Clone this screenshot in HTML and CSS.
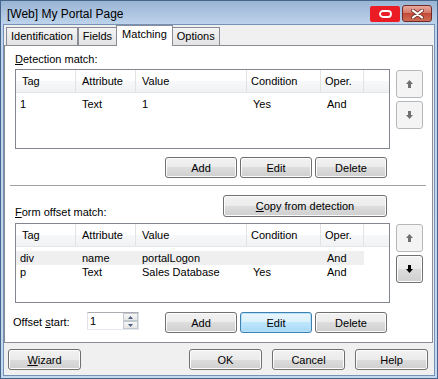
FILE: index.html
```html
<!DOCTYPE html>
<html lang="en">
<head>
  <meta charset="UTF-8">
  <title>[Web] My Portal Page</title>
  <link rel="stylesheet" href="styles.css">
</head>
<body>
  <div class="window">
    <div class="titlebar">
      <span class="title">[Web] My Portal Page</span>
      <div class="caption-btns">
        <span class="cap-btn cap-logo">
          <svg width="13" height="8" viewBox="0 0 13 8"><rect x="1" y="1" width="11" height="6" rx="3" fill="none" stroke="#fff" stroke-width="1.8"/></svg>
        </span>
        <span class="cap-btn cap-close">
          <svg width="13" height="10" viewBox="0 0 13 10">
            <path d="M2 1.5 L11 8.5 M11 1.5 L2 8.5" stroke="#7a3a32" stroke-width="4" stroke-linecap="round"/>
            <path d="M2 1.5 L11 8.5 M11 1.5 L2 8.5" stroke="#fff" stroke-width="2.2" stroke-linecap="round"/>
          </svg>
        </span>
      </div>
    </div>

    <div class="client">
      <div class="tabs">
        <div class="tab">Identification</div>
        <div class="tab">Fields</div>
        <div class="tab active">Matching</div>
        <div class="tab">Options</div>
      </div>

      <div class="panel">
        <div class="label"><u>D</u>etection match:</div>
        <div class="section">
          <div class="list-col">
            <div class="listview">
              <div class="lv-head">
                <span class="c1">Tag</span><span class="c2">Attribute</span><span class="c3">Value</span><span class="c4">Condition</span><span class="c5">Oper.</span>
              </div>
              <div class="lv-body">
                <div class="lv-row">
                  <span class="c1">1</span><span class="c2">Text</span><span class="c3">1</span><span class="c4">Yes</span><span class="c5">And</span>
                </div>
              </div>
            </div>
            <div class="btn-row">
              <button class="btn">Add</button>
              <button class="btn">Edit</button>
              <button class="btn">Delete</button>
            </div>
          </div>
          <div class="side">
            <button class="arrow-btn disabled">
              <svg width="7" height="8" viewBox="0 0 7 8"><polygon points="3.5,0 7,4 5,4 5,8 2,8 2,4 0,4"/></svg>
            </button>
            <button class="arrow-btn disabled">
              <svg width="7" height="8" viewBox="0 0 7 8"><polygon points="3.5,8 7,4 5,4 5,0 2,0 2,4 0,4"/></svg>
            </button>
          </div>
        </div>

        <div class="separator"></div>

        <div class="copy-row">
          <div class="label copy-label"><u>F</u>orm offset match:</div>
          <button class="btn copy-btn"><u>C</u>opy from detection</button>
        </div>
        <div class="section section2">
          <div class="list-col">
            <div class="listview">
              <div class="lv-head">
                <span class="c1">Tag</span><span class="c2">Attribute</span><span class="c3">Value</span><span class="c4">Condition</span><span class="c5">Oper.</span>
              </div>
              <div class="lv-body">
                <div class="lv-row hot">
                  <span class="c1">div</span><span class="c2">name</span><span class="c3">portalLogon</span><span class="c4"></span><span class="c5">And</span>
                </div>
                <div class="lv-row">
                  <span class="c1">p</span><span class="c2">Text</span><span class="c3">Sales Database</span><span class="c4">Yes</span><span class="c5">And</span>
                </div>
              </div>
            </div>
          </div>
          <div class="side">
            <button class="arrow-btn disabled">
              <svg width="7" height="8" viewBox="0 0 7 8"><polygon points="3.5,0 7,4 5,4 5,8 2,8 2,4 0,4"/></svg>
            </button>
            <button class="arrow-btn">
              <svg width="7" height="8" viewBox="0 0 7 8"><polygon points="3.5,8 7,4 5,4 5,0 2,0 2,4 0,4"/></svg>
            </button>
          </div>
        </div>

        <div class="offset-row">
          <div class="offset-label">Offset <u>s</u>tart:</div>
          <div class="spin">
            <span class="spin-val">1</span>
            <span class="spin-btns">
              <span class="spin-btn"><svg width="5" height="3" viewBox="0 0 5 3"><polygon points="2.5,0 5,3 0,3"/></svg></span>
              <span class="spin-btn"><svg width="5" height="3" viewBox="0 0 5 3"><polygon points="0,0 5,0 2.5,3"/></svg></span>
            </span>
          </div>
          <div class="btn-row">
            <button class="btn">Add</button>
            <button class="btn focused">Edit</button>
            <button class="btn">Delete</button>
          </div>
        </div>
      </div>

      <div class="footer">
        <button class="btn"><u>W</u>izard</button>
        <span class="spacer"></span>
        <button class="btn">OK</button>
        <button class="btn">Cancel</button>
        <button class="btn">Help</button>
      </div>
    </div>
  </div>
</body>
</html>
```

FILE: styles.css
```css
body, html {
  height: 100%;
  margin: 0;
}
body {
  font-family: "Liberation Sans", Arial, sans-serif;
  font-size: 11px;
  color: #000;
}
.window {
  width: 438px;
  height: 379px;
  box-sizing: border-box;
  border: 1px solid #45658c;
  padding: 0 2px 2px;
  background: linear-gradient(#99b4d4, #bfd4ec 24px, #c4d8ee);
  display: flex;
  flex-direction: column;
}
.titlebar {
  height: 23px;
  display: flex;
}
.title {
  flex: 1;
  padding: 5px 0 0 4px;
  font-size: 12px;
  line-height: 16px;
  color: #000;
}
.caption-btns {
  display: flex;
  gap: 2px;
  margin-right: 3px;
}
.cap-btn {
  width: 30px;
  box-sizing: border-box;
  display: flex;
  align-items: center;
  justify-content: center;
}
.cap-logo {
  margin-top: 5px;
  height: 16px;
  background: #ec1c24;
  border-radius: 2px;
}
.cap-close {
  margin-top: 4px;
  height: 17px;
  border: 1px solid #6d2b24;
  border-radius: 3px;
  background: linear-gradient(#e9aa9e, #d67a6a 45%, #c44a38 50%, #cf6d55);
}
.client {
  flex: 1;
  border: 1px solid #7592b6;
  background: #f0f0f0;
  display: flex;
  flex-direction: column;
}

/* tabs */
.tabs {
  display: flex;
  align-items: flex-end;
  height: 20px;
  padding-left: 2px;
}
.tab {
  height: 17px;
  line-height: 16px;
  padding: 0 4px;
  border: 1px solid #898c95;
  border-bottom: none;
  background: linear-gradient(#f4f4f4, #e3e3e3);
}
.tab.active {
  position: relative;
  z-index: 1;
  height: 20px;
  margin: 0 -1px -1px;
  padding: 0 5px;
  background: #fff;
}
.panel {
  height: 298px;
  box-sizing: border-box;
  margin-right: 1px;
  border: 1px solid #898c95;
  background: #fff;
  padding: 6px 8px 8px 10px;
}
.label {
  height: 14px;
  line-height: 14px;
}

/* list sections */
.section {
  display: flex;
  gap: 6px;
  margin-top: 3px;
}
.section2 {
  margin-top: 6px;
}
.list-col {
  width: 375px;
}
.listview {
  height: 80px;
  box-sizing: border-box;
  border: 1px solid #828790;
  overflow: hidden;
}
.lv-head {
  display: flex;
  height: 22px;
  border-bottom: 1px solid #e5e5e5;
  background: linear-gradient(#fff 50%, #f7f8f9 50%, #f1f2f4);
}
.lv-head span,
.lv-row span {
  box-sizing: border-box;
  padding-left: 6px;
  white-space: nowrap;
}
.lv-head span {
  line-height: 22px;
  border-right: 1px solid #e3e3e3;
}
.lv-head .c4,
.lv-head .c5 {
  padding-left: 4px;
}
.c1 { width: 60px; }
.c2 { width: 60px; }
.c3 { width: 111px; }
.c4 { width: 74px; }
.c5 { width: 43px; }
.lv-body {
  padding-top: 4px;
}
.lv-row {
  display: flex;
  width: 348px;
  height: 14px;
  line-height: 14px;
}
.lv-row .c1 {
  padding-left: 4px;
}
.lv-row.hot {
  background: #efefef;
}
.side {
  display: flex;
  flex-direction: column;
  gap: 3px;
  margin-top: 1px;
}
.arrow-btn {
  width: 27px;
  height: 28px;
  padding: 0;
  border: 1px solid #707070;
  border-radius: 3px;
  background: linear-gradient(#f2f2f2, #ebebeb 50%, #dddddd 50%, #cfcfcf);
  box-shadow: inset 0 0 0 1px #fcfcfc;
  display: flex;
  align-items: center;
  justify-content: center;
  fill: #000;
}
.arrow-btn.disabled {
  border-color: #b5b8bb;
  background: #f4f4f4;
  box-shadow: none;
  fill: #707070;
}

/* buttons */
.btn-row {
  display: flex;
  justify-content: flex-end;
  gap: 3px;
  margin: 8px 3px 0 0;
}
.btn {
  width: 72px;
  height: 21px;
  padding: 0;
  font: inherit;
  color: #000;
  border: 1px solid #707070;
  border-radius: 3px;
  background: linear-gradient(#f2f2f2, #ebebeb 50%, #dddddd 50%, #cfcfcf);
  box-shadow: inset 0 0 0 1px #fcfcfc;
}
.btn.focused {
  border-color: #3c7fb1;
  background: linear-gradient(#eaf6fd, #d9f0fc 50%, #bee6fd 50%, #a7d9f5);
  box-shadow: inset 0 0 0 1px #b8e2f9;
}
.separator {
  height: 1px;
  background: #a0a0a0;
  margin: 7px -2px 0 -5px;
}
.copy-row {
  width: 375px;
  display: flex;
  justify-content: space-between;
  align-items: flex-end;
  margin-top: 9px;
}
.copy-label {
  margin-bottom: -2px;
}
.copy-btn {
  width: 164px;
  height: 22px;
  margin-right: 3px;
}

/* offset start */
.offset-row {
  width: 375px;
  display: flex;
  align-items: flex-start;
  margin-top: 9px;
}
.offset-label {
  width: 74px;
  margin-left: -2px;
  line-height: 20px;
}
.spin {
  width: 52px;
  height: 18px;
  box-sizing: border-box;
  border: 1px solid;
  border-color: #abadb3 #dbdfe6 #e3e9ef #e2e3ea;
  background: #fff;
  display: flex;
}
.spin-val {
  flex: 1;
  padding-left: 2px;
  line-height: 16px;
}
.spin-btns {
  width: 15px;
  display: flex;
  flex-direction: column;
}
.spin-btn {
  height: 8px;
  box-sizing: border-box;
  border: 1px solid #c3c9d0;
  background: linear-gradient(#f7f7f7, #e6e6e6);
  display: flex;
  align-items: center;
  justify-content: center;
  fill: #4d5f80;
}
.offset-row .btn-row {
  margin: 0 3px 0 auto;
}

/* footer */
.footer {
  display: flex;
  gap: 10px;
  margin-top: 6px;
  padding: 0 6px 0 4px;
}
.footer .btn {
  width: 73px;
}
.spacer {
  flex: 1;
}
```
